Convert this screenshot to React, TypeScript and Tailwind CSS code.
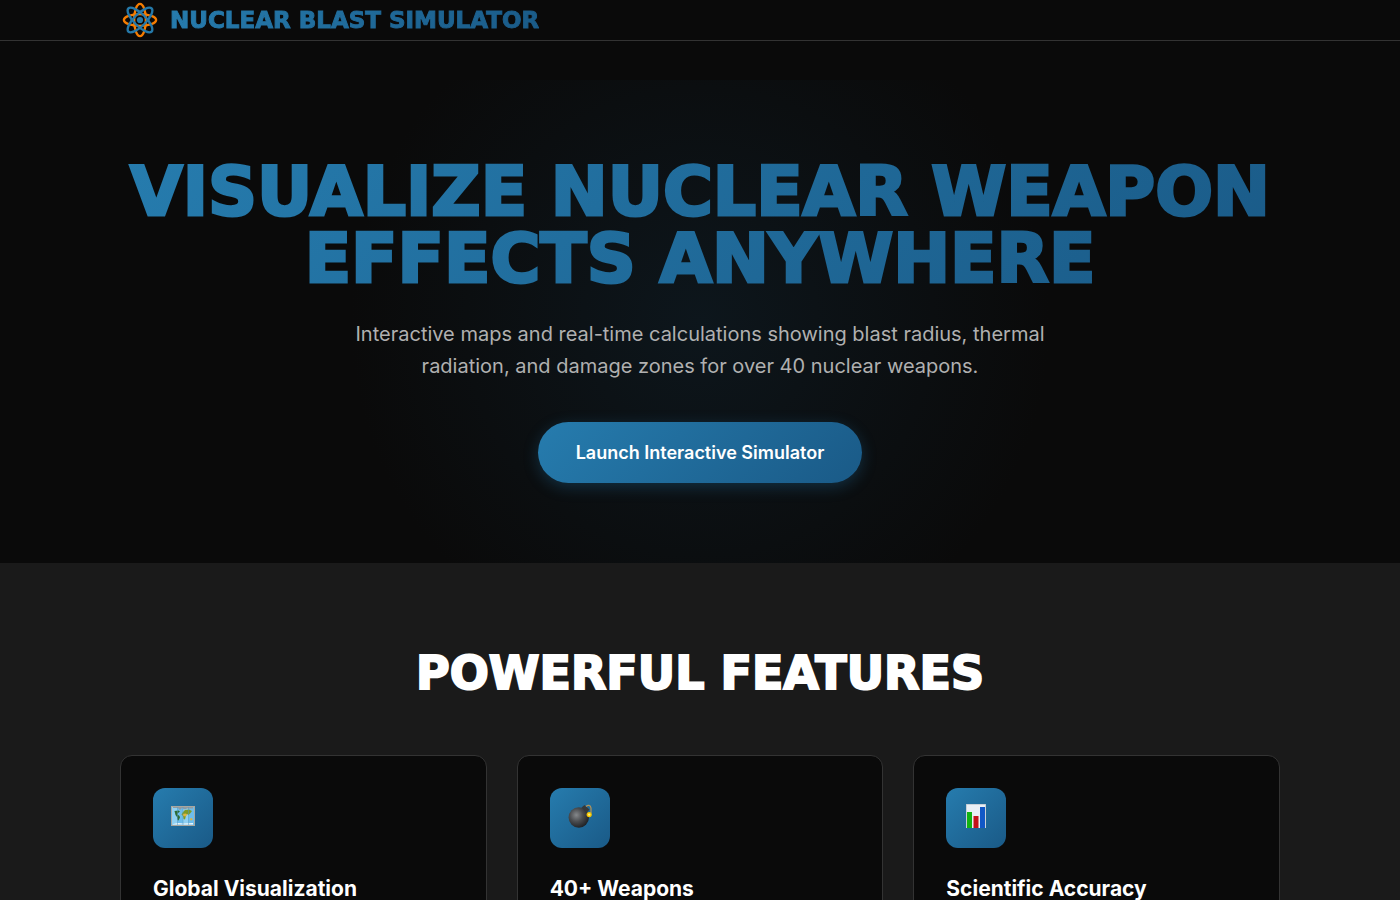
function AtomLogo() {
  return (
    <svg className="size-10 shrink-0" viewBox="0 0 40 40" fill="none" strokeWidth="2.4" aria-hidden="true">
      <g stroke="#f57c00">
        <ellipse cx="20" cy="20" rx="5.9" ry="16.1" />
        <ellipse cx="20" cy="20" rx="16.1" ry="5.9" />
      </g>
      <g stroke="#2579a9">
        <ellipse cx="20" cy="20" rx="6" ry="16.4" transform="rotate(45 20 20)" />
        <ellipse cx="20" cy="20" rx="6" ry="16.4" transform="rotate(-45 20 20)" />
      </g>
      <circle cx="20" cy="20" r="3.1" fill="#2579a9" />
    </svg>
  );
}

function MapIcon() {
  return (
    <svg className="size-full" viewBox="0 0 60 60" aria-hidden="true">
      <rect x="18" y="18" width="24" height="20" fill="#a9a79f" />
      <rect x="19" y="19" width="22" height="18" fill="#6dbdec" />
      <path d="M19 19h5.500v18H19zM30 19h5.500v18H30z" fill="#8fd0f3" />
      <path d="M20 19h20v1.500H34l-2 1-3-1.500-2 2-2-2h-5z" fill="#8f9ba3" />
      <path d="M21.500 23l4-.5 1.500 1-2 1.500-.5 1.500 2 1.500.5 1.500-1.500 3-1-.5-.5-3-1.500-2z" fill="#2d6b35" />
      <path d="M30 24l2-2 4-.5 3 1.500-1.500 2-2 2-1.500-1-1 1.500-1 4-1.500-.5-.5-3-1.500-1.500z" fill="#7f9a28" />
      <path d="M30 26l2.500-.5 2 1-2 2-2.500-.5zM37 30.500l2-.5.500 2-2 .5z" fill="#e0b43d" />
      <path d="M20 36l5-1 5 .5 10-.5v1.500H20z" fill="#f2f8fb" />
      <path d="M24.500 19v18M30 19v18M35.500 19v18" stroke="#5599bd" strokeWidth=".5" />
    </svg>
  );
}

function BombIcon() {
  return (
    <svg className="size-full" viewBox="0 0 60 60" aria-hidden="true">
      <defs>
        <radialGradient id="bomb-body" cx=".38" cy=".38" r=".65">
          <stop offset="0" stopColor="#85888b" />
          <stop offset=".5" stopColor="#4a4c4f" />
          <stop offset="1" stopColor="#202225" />
        </radialGradient>
      </defs>
      <circle cx="28.800" cy="29.500" r="10.200" fill="url(#bomb-body)" />
      <path d="M31.500 19.500l3-2.500 5 4.500-2.500 3z" fill="#37393b" />
      <path d="M36 18.500c2-2 4.500-1.500 5 1.500v5" fill="none" stroke="#b3935a" strokeWidth="1.200" />
      <circle cx="39.200" cy="26.600" r="2.600" fill="#f5c400" />
      <circle cx="39.200" cy="26.600" r="1.200" fill="#fff07a" />
    </svg>
  );
}

function ChartIcon() {
  return (
    <svg className="size-full" viewBox="0 0 60 60" aria-hidden="true">
      <rect x="20" y="16" width="20" height="24" fill="#b9c3cc" />
      <rect x="20.700" y="16.700" width="18.600" height="23.300" fill="#e9eff5" />
      <rect x="21" y="24" width="5" height="16" fill="#12b312" />
      <rect x="27.500" y="28" width="5" height="12" fill="#c51218" />
      <rect x="34" y="19" width="5" height="21" fill="#1158c7" />
    </svg>
  );
}

const features = [
  { Icon: MapIcon, title: "Global Visualization" },
  { Icon: BombIcon, title: "40+ Weapons" },
  { Icon: ChartIcon, title: "Scientific Accuracy" },
];

export default function App() {
  return (
    <div className="min-h-screen bg-[#0a0a0a] font-['Inter',sans-serif] text-white">
      <header className="border-b border-[#333333]">
        <div className="mx-auto flex h-10 max-w-[1160px] items-center gap-2.5">
          <AtomLogo />
          <a href="#" className="bg-linear-135 from-[#267cae] to-[#1a5a87] bg-clip-text font-['DejaVu_Sans',sans-serif] text-[23px] leading-7 font-bold text-transparent uppercase [-webkit-text-stroke:1px_transparent]">
            Nuclear Blast Simulator
          </a>
        </div>
      </header>
      <main className="pt-[39px]">
        <section className="bg-[radial-gradient(circle_at_50%_50%,#0d161c_0px,#0a0a0a_350px)] pt-[78px] pb-20">
          <div className="mx-auto max-w-[1160px] text-center">
            <h1 className="bg-linear-135 from-[#267cae] to-[#1a5a87] bg-clip-text font-['DejaVu_Sans',sans-serif] text-[68px] leading-[67px] font-bold text-transparent uppercase [-webkit-text-stroke:3px_transparent]">
              Visualize Nuclear Weapon Effects Anywhere
            </h1>
            <p className="mx-auto mt-[26px] max-w-[700px] text-xl leading-8 text-[#b0b0b0]">
              Interactive maps and real-time calculations showing blast radius, thermal radiation, and damage zones for over 40 nuclear weapons.
            </p>
            <button type="button" className="mt-10 h-[61px] rounded-full bg-linear-135 from-[#267cae] to-[#1a5a87] px-[38px] text-lg font-semibold shadow-[0_4px_15px_rgba(38,124,174,0.3)]">
              Launch Interactive Simulator
            </button>
          </div>
        </section>
        <section className="bg-[#1a1a1a] pt-[78px] pb-20">
          <div className="mx-auto max-w-[1160px]">
            <h2 className="text-center font-['DejaVu_Sans',sans-serif] text-[46px] leading-[64px] font-bold uppercase [-webkit-text-stroke:2px_white]">Powerful Features</h2>
            <div className="mt-[50px] grid grid-cols-3 gap-[30px]">
              {features.map(({ Icon, title }) => (
                <article key={title} className="rounded-xl border border-[#333333] bg-[#0a0a0a] p-8">
                  <div className="size-[60px] rounded-xl bg-linear-135 from-[#267cae] to-[#1a5a87]">
                    <Icon />
                  </div>
                  <h3 className="mt-6 text-[21px] leading-[34px] font-bold">{title}</h3>
                </article>
              ))}
            </div>
          </div>
        </section>
      </main>
    </div>
  );
}
